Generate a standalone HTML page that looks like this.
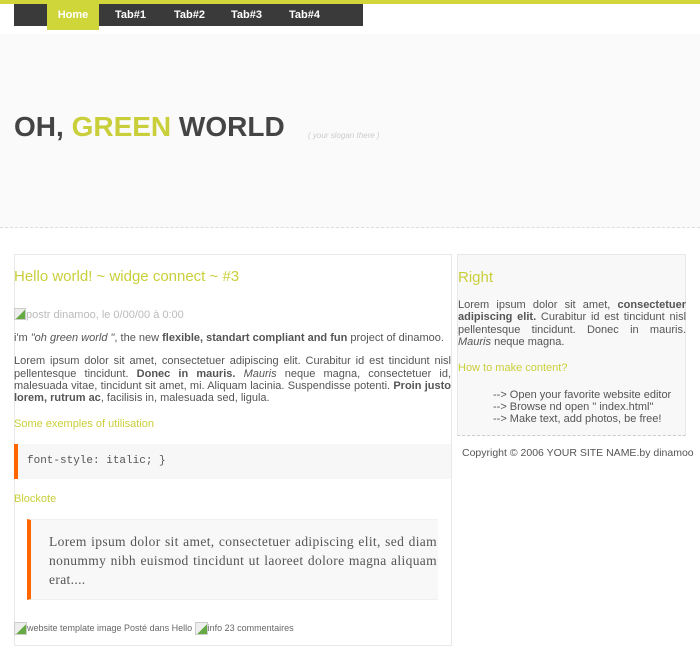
<!DOCTYPE html>
<html><head><meta charset="utf-8"><style>
*{margin:0;padding:0;box-sizing:border-box}
body{width:700px;height:646px;overflow:hidden;background:#fff;font-family:"Liberation Sans",Arial,sans-serif;font-size:11px;color:#555;position:relative}
.abs{position:absolute}
.g{color:#c9cf3a}
p{text-align:justify;line-height:12.3px}
.tab{position:absolute;top:9px;color:#fff;font-weight:bold;font-size:11px}
.img{display:inline-block;width:13px;height:13px;border:1px solid #ccc;vertical-align:-4px;background:linear-gradient(135deg,#eee 55%,#6a4 55%)}
</style></head><body>
<div class="abs" style="left:0;top:0;width:700px;height:4px;background:#d3d63a"></div>
<div class="abs" style="left:14px;top:4px;width:349px;height:22px;background:#3a3a3a"></div>
<div class="abs" style="left:47px;top:0;width:52px;height:30px;background:#cfd63a"></div>
<div class="tab" style="left:47px;width:52px;text-align:center">Home</div>
<div class="tab" style="left:115px">Tab#1</div>
<div class="tab" style="left:174px">Tab#2</div>
<div class="tab" style="left:231px">Tab#3</div>
<div class="tab" style="left:289px">Tab#4</div>
<div class="abs" style="left:0;top:34px;width:700px;height:194px;background:#fafafa;border-bottom:1px dashed #ddd"></div>
<div class="abs" style="left:14px;top:111px;font-size:28px;font-weight:bold;color:#444;white-space:nowrap">OH, <span class="g">GREEN</span> WORLD</div>
<div class="abs" style="left:308px;top:131px;font-size:8px;color:#ccc;font-style:italic">( your slogan there )</div>

<div class="abs" style="left:14px;top:254px;width:438px;height:392px;border:1px solid #e8e8e8"></div>
<div class="abs g" style="left:14px;top:268px;font-size:15px">Hello world! ~ widge connect ~ #3</div>
<div class="abs" style="left:14px;top:308px;color:#bbb"><span class="img" style="width:12px;height:12px;vertical-align:-2px"></span>postr dinamoo, le 0/00/00 à 0:00</div>
<div class="abs" style="left:14px;top:332px;width:437px">
<p>i'm <i>"oh green world "</i>, the new <b>flexible, standart compliant and fun</b> project of dinamoo.</p>
<p style="margin-top:11px">Lorem ipsum dolor sit amet, consectetuer adipiscing elit. Curabitur id est tincidunt nisl pellentesque tincidunt. <b>Donec in mauris.</b> <i>Mauris</i> neque magna, consectetuer id, malesuada vitae, tincidunt sit amet, mi. Aliquam lacinia. Suspendisse potenti. <b>Proin justo lorem, rutrum ac</b>, facilisis in, malesuada sed, ligula.</p>
</div>
<div class="abs g" style="left:14px;top:418px">Some exemples of utilisation</div>
<div class="abs" style="left:14px;top:444px;width:437px;height:35px;background:#f7f7f7;border-left:4px solid #f60"></div>
<div class="abs" style="left:27px;top:455px;font-family:'Liberation Mono',monospace;font-size:11px;color:#555">font-style: italic; }</div>
<div class="abs g" style="left:14px;top:493px">Blockote</div>
<div class="abs" style="left:27px;top:519px;width:411px;height:81px;background:#f8f8f8;border-left:4px solid #f60;border-top:1px solid #f0f0f0;border-bottom:1px solid #f0f0f0"></div>
<div class="abs" style="left:49px;top:532px;width:388px;font-family:'Liberation Serif',serif;font-size:13.5px;letter-spacing:0.35px;line-height:19px;text-align:justify;color:#555">Lorem ipsum dolor sit amet, consectetuer adipiscing elit, sed diam nonummy nibh euismod tincidunt ut laoreet dolore magna aliquam erat....</div>
<div class="abs" style="left:14px;top:622px;font-size:9px;color:#666;white-space:nowrap"><span class="img"></span>website template image Posté dans Hello <span class="img"></span>info 23 commentaires</div>

<div class="abs" style="left:457px;top:254px;width:229px;height:182px;background:#f8f8f8;border:1px solid #e8e8e8;border-bottom:1px dashed #ccc"></div>
<div class="abs g" style="left:458px;top:269px;font-size:15px">Right</div>
<div class="abs" style="left:458px;top:299px;width:228px"><p>Lorem ipsum dolor sit amet, <b>consectetuer adipiscing elit.</b> Curabitur id est tincidunt nisl pellentesque tincidunt. Donec in mauris. <i>Mauris</i> neque magna.</p></div>
<div class="abs g" style="left:458px;top:362px">How to make content?</div>
<div class="abs" style="left:493px;top:389px;line-height:12px">--&gt; Open your favorite website editor<br>--&gt; Browse nd open " index.html"<br>--&gt; Make text, add photos, be free!</div>
<div class="abs" style="left:462px;top:447px;white-space:nowrap;font-size:10.5px">Copyright © 2006 YOUR SITE NAME.by dinamoo</div>
</body></html>
